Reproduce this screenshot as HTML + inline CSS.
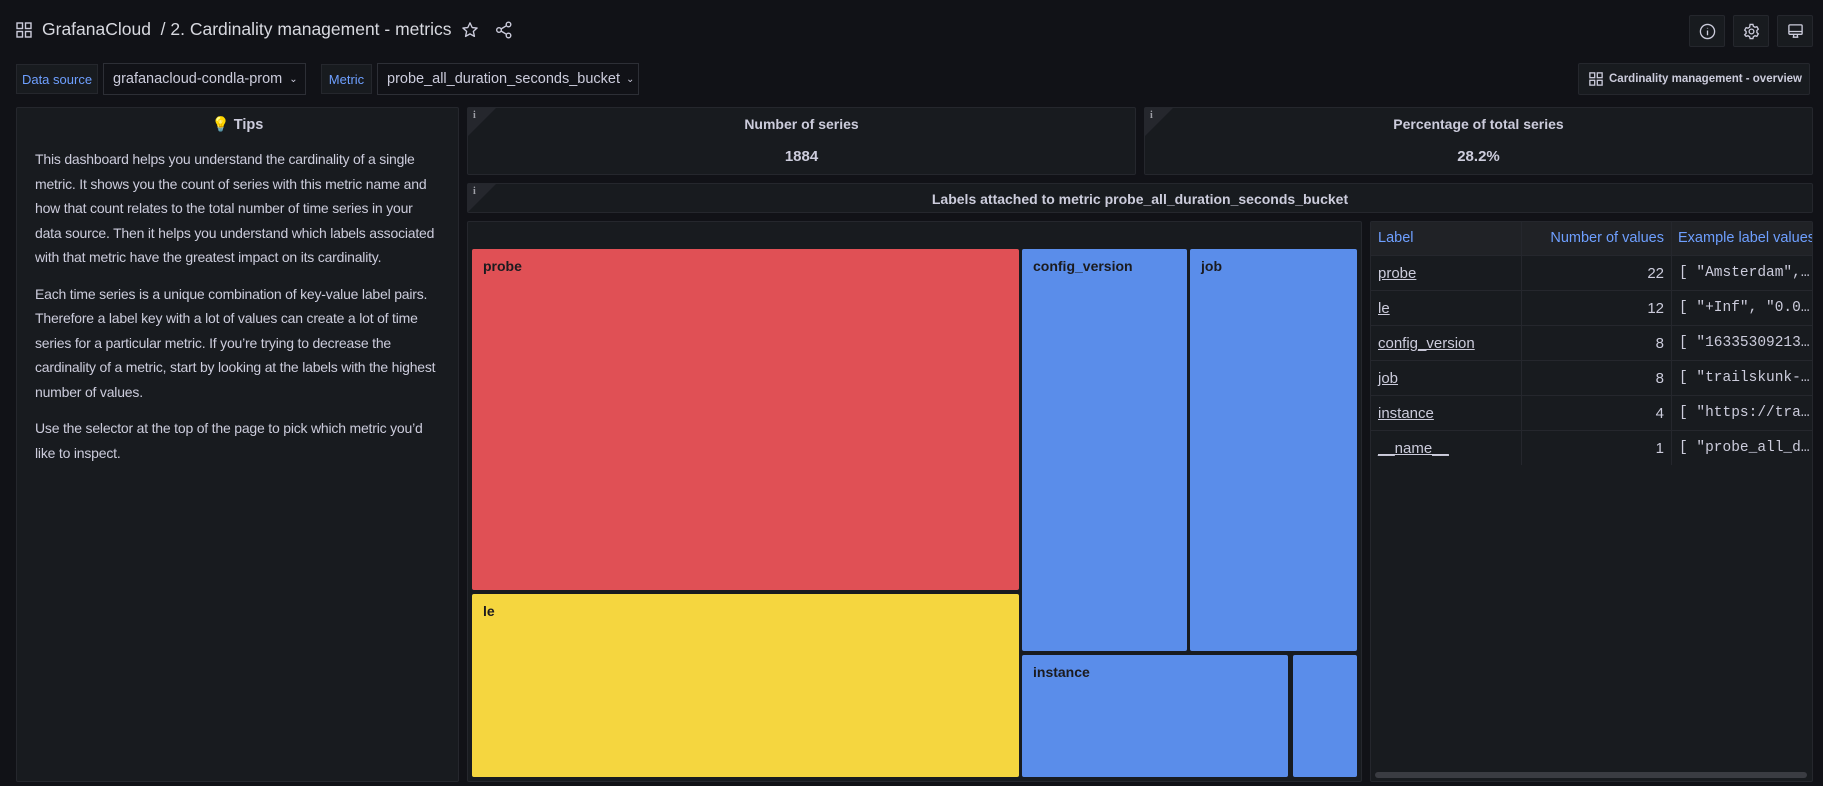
<!DOCTYPE html>
<html><head><meta charset="utf-8"><style>
*{box-sizing:border-box;margin:0;padding:0}
body{width:1823px;height:786px;background:#111217;font-family:"Liberation Sans",sans-serif;color:#ccccdc;position:relative;overflow:hidden}
.a{position:absolute;white-space:nowrap}
.p{position:absolute;background:#181b1f;border:1px solid #25272d;border-radius:2px}
.btn{position:absolute;background:#181b1f;border:1px solid #25272d;border-radius:2px}
.lbl{position:absolute;background:#181b1f;border:1px solid #25272d;color:#6e9fff;font-size:13px;display:flex;align-items:center;justify-content:center}
.dd{position:absolute;background:#111217;border:1px solid #2d2f36;font-size:15px;color:#ccccdc;display:flex;align-items:center;padding-left:9px;white-space:nowrap}
.corner{position:absolute;left:0;top:0;width:0;height:0;border-top:28px solid #25272d;border-right:28px solid transparent}
.ci{position:absolute;left:5px;top:2px;font-size:10px;color:#9fa1a8;font-family:"Liberation Serif",serif;font-weight:bold}
.ttl{position:absolute;width:100%;text-align:center;font-size:14px;font-weight:bold;color:#ccccdc}
.r{position:absolute;border-radius:2px;color:#1b1b1f;font-weight:bold;font-size:14px;padding:9px 0 0 11px}
.row{position:absolute;left:0;width:442px;height:35px;border-top:1px solid #25272d;font-size:15px}
.row span{position:absolute;top:9px;white-space:nowrap}
.c1{left:7px;text-decoration:underline;color:#ccccdc}
.c2{right:149px}
.c3{left:308px;font-family:"Liberation Mono",monospace;font-size:14.5px}
.tips p{font-size:14px;line-height:24.5px;margin-bottom:12px;letter-spacing:-0.2px}
</style></head><body>
<svg class="a" style="left:16px;top:22px" width="16" height="16" viewBox="0 0 16 16" fill="none" stroke="#ccccdc" stroke-width="1.4"><rect x="1" y="1" width="5.5" height="5.5"/><rect x="9.5" y="1" width="5.5" height="5.5"/><rect x="1" y="9.5" width="5.5" height="5.5"/><rect x="9.5" y="9.5" width="5.5" height="5.5"/></svg>
<div class="a" style="left:42px;top:19px;font-size:17.5px;color:#d8d9e0">GrafanaCloud&nbsp; / 2. Cardinality management - metrics</div>
<svg class="a" style="left:461px;top:21px" width="18" height="18" viewBox="0 0 24 24" fill="none" stroke="#ccccdc" stroke-width="1.8" stroke-linejoin="round"><path d="M12 2.5l2.9 6.2 6.6.7-5 4.5 1.4 6.6L12 17.2l-5.9 3.3 1.4-6.6-5-4.5 6.6-.7z"/></svg>
<svg class="a" style="left:495px;top:21px" width="18" height="18" viewBox="0 0 18 18" fill="none" stroke="#ccccdc" stroke-width="1.4"><circle cx="13.5" cy="3.5" r="2.3"/><circle cx="4" cy="9" r="2.3"/><circle cx="13.5" cy="14.5" r="2.3"/><path d="M6 8l5.5-3.3M6 10l5.5 3.3"/></svg>
<div class="btn" style="left:1689px;top:15px;width:36px;height:32px"><svg class="a" style="left:9px;top:7px" width="17" height="17" viewBox="0 0 18 18" fill="none" stroke="#ccccdc" stroke-width="1.4"><circle cx="9" cy="9" r="7.5"/><path d="M9 8v5M9 5.2v.6"/></svg></div>
<div class="btn" style="left:1733px;top:15px;width:36px;height:32px"><svg class="a" style="left:9px;top:7px" width="17" height="17" viewBox="0 0 18 18" fill="none" stroke="#ccccdc" stroke-width="1.4"><circle cx="9" cy="9" r="2.5"/><path d="M7.5 1.5h3l.5 2 1.7 1 2-.6 1.5 2.6-1.5 1.5v2l1.5 1.5-1.5 2.6-2-.6-1.7 1-.5 2h-3l-.5-2-1.7-1-2 .6L1.8 12.5l1.5-1.5V9l-1.5-1.5L3.3 4.9l2 .6 1.7-1z"/></svg></div>
<div class="btn" style="left:1777px;top:15px;width:36px;height:32px"><svg class="a" style="left:9px;top:7px" width="17" height="17" viewBox="0 0 18 18" fill="none" stroke="#ccccdc" stroke-width="1.4"><rect x="2" y="2" width="14" height="10" rx="1"/><path d="M2 9h14M6 15h6M7 12v3M11 12v3"/></svg></div>

<div class="lbl" style="left:16px;top:64px;width:82px;height:30px">Data source</div>
<div class="dd" style="left:103px;top:63px;width:203px;height:32px;font-size:14.5px">grafanacloud-condla-prom <span style="font-size:10px;margin-left:7px">⌄</span></div>
<div class="lbl" style="left:321px;top:64px;width:51px;height:30px">Metric</div>
<div class="dd" style="left:377px;top:63px;width:262px;height:32px;font-size:14.5px">probe_all_duration_seconds_bucket <span style="font-size:10px;margin-left:6px">⌄</span></div>
<div class="btn" style="left:1578px;top:63px;width:232px;height:32px;font-size:11.5px;font-weight:bold;display:flex;align-items:center;padding-left:10px;white-space:nowrap">
<svg width="14" height="14" viewBox="0 0 16 16" fill="none" stroke="#ccccdc" stroke-width="1.5" style="margin-right:6px"><rect x="1" y="1" width="5.5" height="5.5"/><rect x="9.5" y="1" width="5.5" height="5.5"/><rect x="1" y="9.5" width="5.5" height="5.5"/><rect x="9.5" y="9.5" width="5.5" height="5.5"/></svg>Cardinality management - overview</div>

<div class="p tips" style="left:16px;top:107px;width:443px;height:675px;padding:0 18px">
<div style="text-align:center;font-size:14.5px;font-weight:bold;margin:8px 0 14px">💡 Tips</div>
<p>This dashboard helps you understand the cardinality of a single metric. It shows you the count of series with this metric name and how that count relates to the total number of time series in your data source. Then it helps you understand which labels associated with that metric have the greatest impact on its cardinality.</p>
<p>Each time series is a unique combination of key-value label pairs. Therefore a label key with a lot of values can create a lot of time series for a particular metric. If you’re trying to decrease the cardinality of a metric, start by looking at the labels with the highest number of values.</p>
<p>Use the selector at the top of the page to pick which metric you’d like to inspect.</p>
</div>

<div class="p" style="left:467px;top:107px;width:669px;height:68px"><div class="corner"></div><div class="ci">i</div>
<div class="ttl" style="top:8px">Number of series</div><div class="ttl" style="top:40px;font-size:15px">1884</div></div>
<div class="p" style="left:1144px;top:107px;width:669px;height:68px"><div class="corner"></div><div class="ci">i</div>
<div class="ttl" style="top:8px">Percentage of total series</div><div class="ttl" style="top:40px;font-size:15px">28.2%</div></div>
<div class="p" style="left:467px;top:183px;width:1346px;height:30px"><div class="corner"></div><div class="ci">i</div>
<div class="ttl" style="top:7px">Labels attached to metric probe_all_duration_seconds_bucket</div></div>

<div class="p" style="left:467px;top:221px;width:895px;height:561px"></div>
<div class="r" style="left:472px;top:249px;width:547px;height:341px;background:#e05055">probe</div>
<div class="r" style="left:472px;top:594px;width:547px;height:183px;background:#f5d63f">le</div>
<div class="r" style="left:1022px;top:249px;width:165px;height:402px;background:#5a8dea">config_version</div>
<div class="r" style="left:1190px;top:249px;width:167px;height:402px;background:#5a8dea">job</div>
<div class="r" style="left:1022px;top:655px;width:266px;height:122px;background:#5a8dea">instance</div>
<div class="r" style="left:1293px;top:655px;width:64px;height:122px;background:#5a8dea"></div>

<div class="p" style="left:1370px;top:221px;width:443px;height:561px;overflow:hidden">
<div class="a" style="left:0;top:0;width:442px;height:33px;background:#202226;color:#6e9fff;font-size:14.5px">
<span class="a" style="left:7px;top:8px">Label</span><span class="a" style="right:149px;top:8px">Number of values</span><span class="a" style="left:307px;top:8px">Example label values</span></div>
<div class="a" style="left:150px;top:0;width:1px;height:243px;background:#25272d"></div>
<div class="a" style="left:300px;top:0;width:1px;height:243px;background:#25272d"></div>
<div class="row" style="top:33px"><span class="c1">probe</span><span class="c2">22</span><span class="c3">[ "Amsterdam",…</span></div>
<div class="row" style="top:68px"><span class="c1">le</span><span class="c2">12</span><span class="c3">[ "+Inf", "0.0…</span></div>
<div class="row" style="top:103px"><span class="c1">config_version</span><span class="c2">8</span><span class="c3">[ "16335309213…</span></div>
<div class="row" style="top:138px"><span class="c1">job</span><span class="c2">8</span><span class="c3">[ "trailskunk-…</span></div>
<div class="row" style="top:173px"><span class="c1">instance</span><span class="c2">4</span><span class="c3">[ "https://tra…</span></div>
<div class="row" style="top:208px"><span class="c1">__name__</span><span class="c2">1</span><span class="c3">[ "probe_all_d…</span></div>
<div class="a" style="left:4px;top:550px;width:432px;height:6px;border-radius:3px;background:#3a3c42"></div>
</div>
</body></html>
